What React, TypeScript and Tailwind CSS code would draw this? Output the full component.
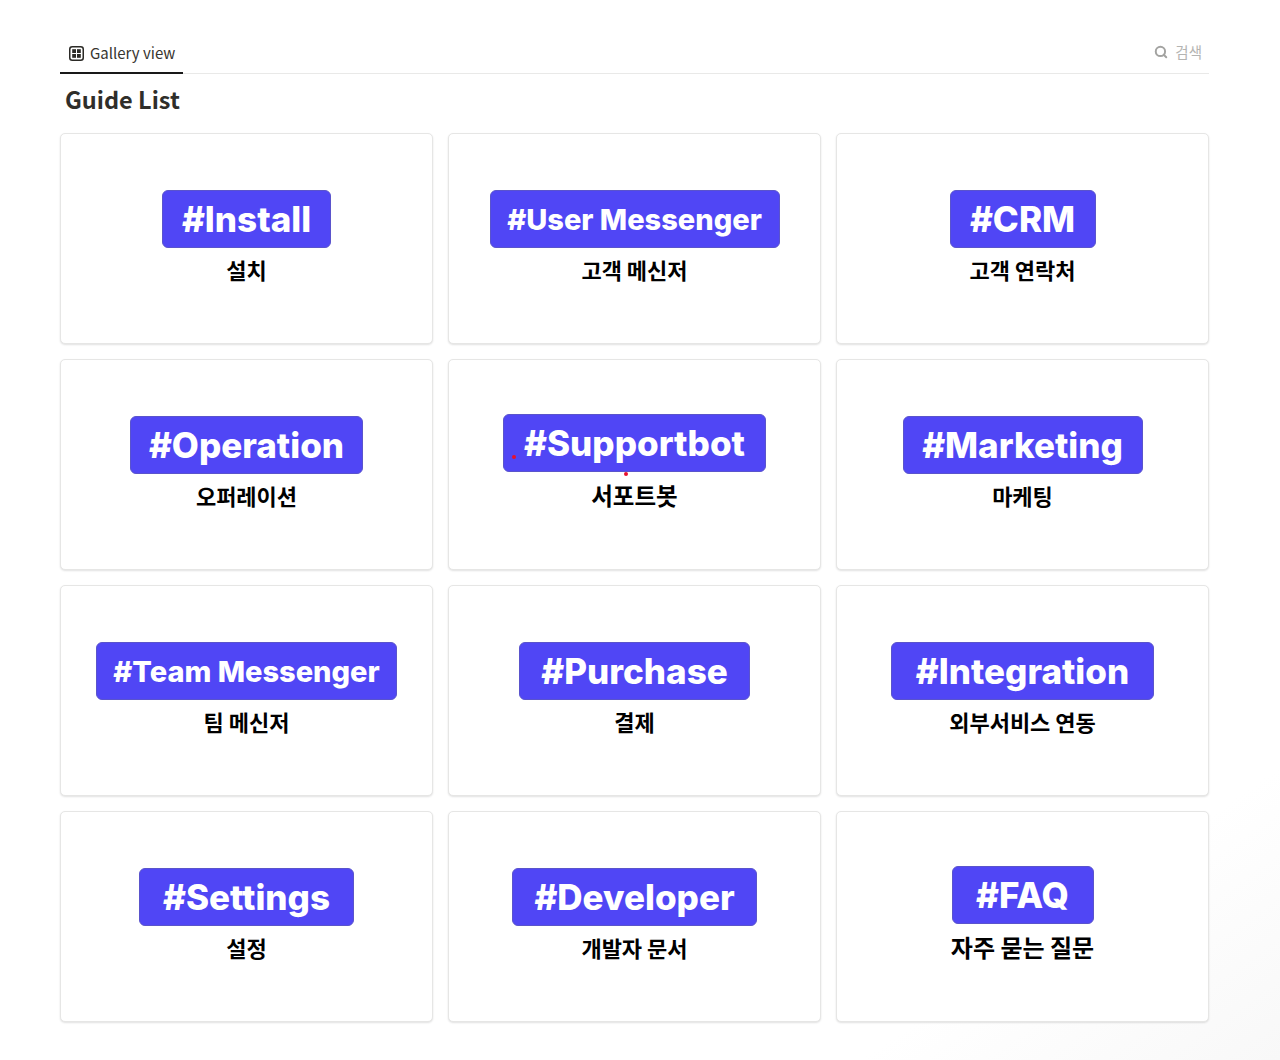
import { Search } from "lucide-react";

type Guide = {
  tag: string;
  label: string;
  badge: string;
  text: string;
  caption?: string;
  dots?: boolean;
};

const guides: Guide[] = [
  { tag: "#Install", label: "설치", badge: "w-[169px] mt-[56px]", text: "text-[35px]" },
  { tag: "#User Messenger", label: "고객 메신저", badge: "w-[290px] mt-[56px]", text: "text-[29px]" },
  { tag: "#CRM", label: "고객 연락처", badge: "w-[146px] mt-[56px]", text: "text-[35px]" },
  { tag: "#Operation", label: "오퍼레이션", badge: "w-[233px] mt-[56px]", text: "text-[35px]" },
  { tag: "#Supportbot", label: "서포트봇", badge: "w-[263px] mt-[54px]", text: "text-[35px]", caption: "mt-[7px] text-[23.5px]", dots: true },
  { tag: "#Marketing", label: "마케팅", badge: "w-[240px] mt-[56px]", text: "text-[35px]" },
  { tag: "#Team Messenger", label: "팀 메신저", badge: "w-[301px] mt-[56px]", text: "text-[29px]" },
  { tag: "#Purchase", label: "결제", badge: "w-[231px] mt-[56px]", text: "text-[35px]" },
  { tag: "#Integration", label: "외부서비스 연동", badge: "w-[263px] mt-[56px]", text: "text-[35px]" },
  { tag: "#Settings", label: "설정", badge: "w-[215px] mt-[56px]", text: "text-[35px]" },
  { tag: "#Developer", label: "개발자 문서", badge: "w-[245px] mt-[56px]", text: "text-[35px]" },
  { tag: "#FAQ", label: "자주 묻는 질문", badge: "w-[142px] mt-[54px]", text: "text-[35px]", caption: "mt-[7px] text-[24px]" },
];

function GalleryIcon() {
  return (
    <svg width="15" height="15" viewBox="0 0 15 15" fill="none" className="shrink-0">
      <rect x="0.75" y="0.75" width="13.5" height="13.5" rx="2.5" stroke="#2b2a26" strokeWidth="1.5" />
      <rect x="3.2" y="3.2" width="3.8" height="3.8" fill="#2b2a26" />
      <rect x="8" y="3.2" width="3.8" height="3.8" fill="#2b2a26" />
      <rect x="3.2" y="8" width="3.8" height="3.8" fill="#2b2a26" />
      <rect x="8" y="8" width="3.8" height="3.8" fill="#2b2a26" />
    </svg>
  );
}

function GuideCard({ guide }: { guide: Guide }) {
  return (
    <div className="flex h-[211px] flex-col items-center rounded-[5px] border border-[#e6e6e5] bg-white shadow-[0_1px_2px_rgba(0,0,0,0.12)]">
      <div
        className={`relative flex h-[58px] items-center justify-center rounded-[6px] border border-[#5a54cc] bg-[#5046f5] font-['Inter',sans-serif] font-extrabold text-white ${guide.badge}`}
      >
        <span className={`leading-none ${guide.text}`}>{guide.tag}</span>
        {guide.dots && (
          <>
            <span className="absolute bottom-[12px] left-[8px] size-[4px] rounded-full bg-[#e8112d]" />
            <span className="absolute -bottom-[5px] left-[120px] size-[4px] rounded-full bg-[#e8112d]" />
          </>
        )}
      </div>
      <p
        className={`font-['Noto_Sans_CJK_KR',sans-serif] leading-[32px] font-bold text-black ${guide.caption ?? "mt-[5px] text-[22px]"}`}
      >
        {guide.label}
      </p>
    </div>
  );
}

export default function App() {
  return (
    <div className="h-[1060px] overflow-hidden bg-[linear-gradient(145deg,#ffffff_85%,#f8f8f8_100%)] px-[60px] pt-[34px] font-['Noto_Sans_CJK_KR',sans-serif]">
      <div className="w-[1149px]">
        <div className="flex h-[40px] items-stretch justify-between border-b border-[#e9e9e8]">
          <div className="-mb-px flex w-[123px] items-center gap-[6px] border-b-2 border-[#191919] pl-[9px]">
            <GalleryIcon />
            <span className="text-[15px] text-[#37352f]">Gallery view</span>
          </div>
          <div className="flex items-center gap-[7px] pr-[7px] pb-[4px] text-[14.5px] text-[#b4b4b2]">
            <Search size={14} strokeWidth={3.4} className="text-[#a3a3a1]" />
            <span>검색</span>
          </div>
        </div>
        <h1 className="mt-[7px] pl-[5px] text-[23.5px] leading-[36px] font-semibold text-[#2f2e2a]">Guide List</h1>
        <div className="mt-[16px] grid grid-cols-3 gap-[15px]">
          {guides.map((g) => (
            <GuideCard key={g.tag} guide={g} />
          ))}
        </div>
      </div>
    </div>
  );
}
